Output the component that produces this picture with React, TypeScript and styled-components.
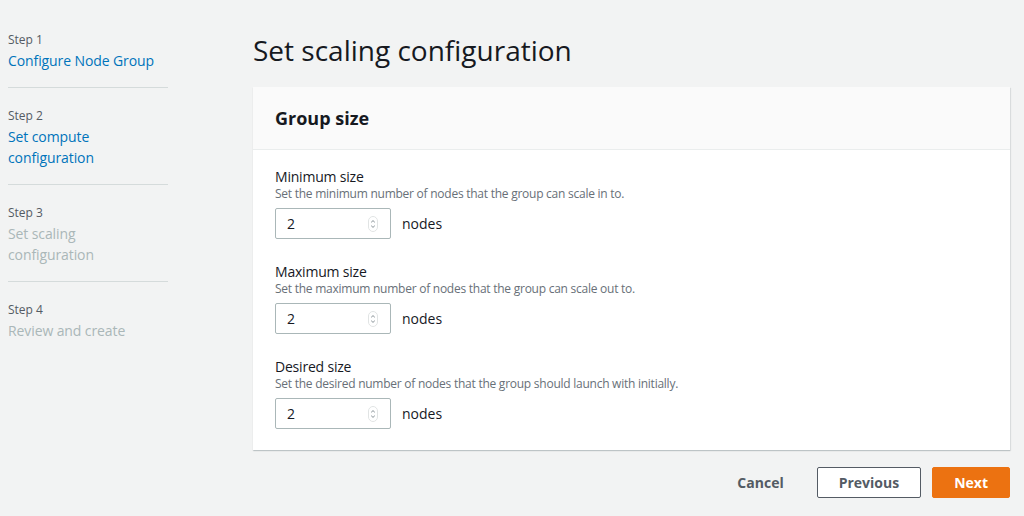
import { createGlobalStyle, styled } from 'styled-components';

const GlobalStyle = createGlobalStyle`
    body {
        margin: 0;
        background: #f2f3f3;
        font-family: "Open Sans", "Noto Sans", sans-serif;
        color: #16191f;
    }
`

const Page = styled.div`
    display: flex;
    align-items: flex-start;
    padding: 0 14px 0 8px;
`
const Sidebar = styled.nav`
    width: 160px;
    flex-shrink: 0;
    padding-top: 12px;
`
const StepItem = styled.div`
    padding: 20px 0 16px;
    border-bottom: 1px solid #d5dbdb;
    &:last-child {
        border-bottom: none;
    }
`
const StepLabel = styled.div`
    font-size: 12px;
    line-height: 16px;
    color: #545b64;
`
const StepTitle = styled.div<{ $disabled?: boolean }>`
    max-width: 150px;
    margin-top: 2px;
    font-size: 14px;
    line-height: 21px;
    font-weight: 500;
    letter-spacing: -0.1px;
    color: ${p => p.$disabled ? '#aab7b8' : '#0073bb'};
`
const Main = styled.main`
    flex: 1;
    margin-left: 85px;
    padding-top: 32px;
`
const Title = styled.h1`
    margin: 0 0 19px;
    font-size: 28px;
    line-height: 36px;
    font-weight: 400;
`
const Card = styled.section`
    background: #fff;
    box-shadow: 0 1px 1px 0 rgba(0, 28, 36, 0.15), 1px 1px 1px 0 rgba(0, 28, 36, 0.08);
`
const CardHeader = styled.div`
    background: #fafafa;
    border-bottom: 1px solid #eaeded;
    padding: 20px 22px;
    h2 {
        margin: 0;
        font-size: 18px;
        line-height: 22px;
        font-weight: 700;
    }
`
const CardBody = styled.div`
    display: flex;
    flex-direction: column;
    gap: 23px;
    padding: 17px 22px 21px;
`
const Field = styled.div``
const FieldLabel = styled.div`
    font-size: 14px;
    line-height: 19px;
    font-weight: 500;
    letter-spacing: -0.2px;
`
const FieldDesc = styled.div`
    font-size: 12px;
    line-height: 16px;
    letter-spacing: -0.25px;
    color: #687078;
`
const InputRow = styled.div`
    display: flex;
    align-items: center;
    gap: 11px;
    margin-top: 6px;
`
const NumberBox = styled.div`
    box-sizing: border-box;
    width: 116px;
    height: 31px;
    border: 1px solid #aab7b8;
    border-radius: 2px;
    display: flex;
    align-items: center;
    justify-content: space-between;
    padding: 0 12px 0 11px;
    font-size: 14px;
`
const Unit = styled.span`
    font-size: 14px;
`
const Footer = styled.div`
    display: flex;
    justify-content: flex-end;
    align-items: center;
    gap: 11px;
    margin-top: 17px;
`
const Button = styled.button<{ $variant?: 'link' | 'normal' | 'primary' }>`
    box-sizing: border-box;
    height: 31px;
    padding: 0 21px;
    font-family: inherit;
    font-size: 14px;
    font-weight: 700;
    border-radius: 2px;
    border: 1px solid ${p => p.$variant === 'primary' ? '#ec7211' : p.$variant === 'normal' ? '#545b64' : 'transparent'};
    background: ${p => p.$variant === 'primary' ? '#ec7211' : p.$variant === 'normal' ? '#fff' : 'transparent'};
    color: ${p => p.$variant === 'primary' ? '#fff' : '#545b64'};
`

const Spinner = () => (
    <svg width="10" height="16" viewBox="0 0 10 16">
        <rect x="0.5" y="0.5" width="9" height="15" rx="4.5" fill="none" stroke="#e1e4e4" />
        <path d="M3.2 6.3 L5 4.6 L6.8 6.3 M3.2 9.7 L5 11.4 L6.8 9.7" fill="none" stroke="#879196" strokeWidth="1" />
    </svg>
)

const steps = [
    { label: 'Step 1', title: 'Configure Node Group', disabled: false },
    { label: 'Step 2', title: 'Set compute configuration', disabled: false },
    { label: 'Step 3', title: 'Set scaling configuration', disabled: true },
    { label: 'Step 4', title: 'Review and create', disabled: true },
]

const fields = [
    { label: 'Minimum size', desc: 'Set the minimum number of nodes that the group can scale in to.' },
    { label: 'Maximum size', desc: 'Set the maximum number of nodes that the group can scale out to.' },
    { label: 'Desired size', desc: 'Set the desired number of nodes that the group should launch with initially.' },
]

const App: React.FC = () => {
    return (
        <Page>
            <GlobalStyle />
            <Sidebar>
                {steps.map(s => (
                    <StepItem key={s.label}>
                        <StepLabel>{s.label}</StepLabel>
                        <StepTitle $disabled={s.disabled}>{s.title}</StepTitle>
                    </StepItem>
                ))}
            </Sidebar>
            <Main>
                <Title>Set scaling configuration</Title>
                <Card>
                    <CardHeader><h2>Group size</h2></CardHeader>
                    <CardBody>
                        {fields.map(f => (
                            <Field key={f.label}>
                                <FieldLabel>{f.label}</FieldLabel>
                                <FieldDesc>{f.desc}</FieldDesc>
                                <InputRow>
                                    <NumberBox>2<Spinner /></NumberBox>
                                    <Unit>nodes</Unit>
                                </InputRow>
                            </Field>
                        ))}
                    </CardBody>
                </Card>
                <Footer>
                    <Button $variant="link">Cancel</Button>
                    <Button $variant="normal">Previous</Button>
                    <Button $variant="primary">Next</Button>
                </Footer>
            </Main>
        </Page>
    );
}

export default App;
